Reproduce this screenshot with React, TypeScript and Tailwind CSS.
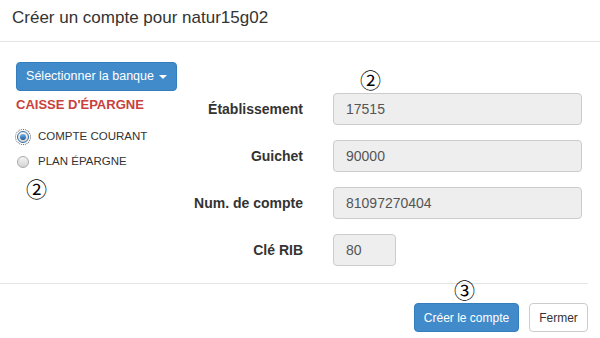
import React from 'react';

const fields = [
  { label: 'Établissement', value: '17515', wide: true },
  { label: 'Guichet', value: '90000', wide: true },
  { label: 'Num. de compte', value: '81097270404', wide: true },
  { label: 'Clé RIB', value: '80', wide: false },
];

function Circled({ n, className }: { n: string; className?: string }) {
  return (
    <span
      className={`text-[21px] leading-none text-black ${className ?? ''}`}
      style={{ fontFamily: '"Noto Sans CJK JP", "DejaVu Sans", sans-serif' }}
    >
      {n}
    </span>
  );
}

function Radio({ checked, label }: { checked?: boolean; label: string }) {
  return (
    <label className="flex h-[13px] items-center gap-[9px] text-[11.5px] text-[#333]">
      <span
        className={`flex h-[12px] w-[12px] items-center justify-center rounded-full border ${
          checked ? 'border-[#2f6aa3] outline-1 outline-dotted outline-[#555] outline-offset-1' : 'border-[#a9a9a9]'
        } bg-gradient-to-b from-[#f4f4f4] to-[#d4d4d4]`}
      >
        {checked && <span className="h-[6px] w-[6px] rounded-full bg-gradient-to-b from-[#6fb3ea] to-[#1a5c9b]" />}
      </span>
      {label}
    </label>
  );
}

export default function App() {
  return (
    <div className="h-[338px] w-[600px] overflow-hidden bg-white" style={{ fontFamily: '"Liberation Sans", Arial, sans-serif' }}>
      {/* Header */}
      <div className="flex h-[42px] items-center border-b border-[#e5e5e5] pl-[12px] pb-[6px]">
        <h1 className="text-[17px] text-[#333]">Créer un compte pour natur15g02</h1>
      </div>

      {/* Body */}
      <div className="flex h-[241px]">
        <div className="flex w-[190px] flex-col pl-[16px] pt-[20px]">
          <button className="flex h-[29px] w-[161px] items-center justify-center gap-[5px] rounded-[4px] border border-[#357ebd] bg-[#428bca] text-[12.5px] text-white">
            Sélectionner la banque
            <span className="mt-[1px] h-0 w-0 border-x-[4px] border-t-[4px] border-x-transparent border-t-white" />
          </button>
          <div className="mt-[4px] text-[13px] font-bold text-[#c9403c]">CAISSE D'ÉPARGNE</div>
          <div className="mt-[16px] flex flex-col gap-[12px] pl-[1px]">
            <Radio checked label="COMPTE COURANT" />
            <Radio label="PLAN ÉPARGNE" />
          </div>
          <div className="mt-[9px] flex h-[22px] items-center pl-[10px]">
            <Circled n="②" />
          </div>
        </div>

        <div className="flex flex-1 flex-col pt-[27px]">
          <div className="flex h-[20px] items-center pl-[170px]">
            <Circled n="②" />
          </div>
          <div className="mt-[4px] flex flex-col gap-[15px]">
            {fields.map(f => (
              <div key={f.label} className="flex items-center">
                <div className="w-[113px] text-right text-[14px] font-bold text-[#333]">{f.label}</div>
                <div
                  className={`ml-[30px] flex h-[32px] items-center rounded-[4px] border border-[#ccc] bg-[#eee] pl-[12px] text-[14px] text-[#555] ${
                    f.wide ? 'w-[249px]' : 'w-[63px]'
                  }`}
                >
                  {f.value}
                </div>
              </div>
            ))}
          </div>
        </div>
      </div>

      {/* Footer */}
      <div className="relative w-[588px] border-t border-[#e5e5e5]">
        <Circled n="③" className="absolute left-[454px] top-[-5px]" />
        <div className="flex justify-end gap-[10px] pt-[19px]">
          <button className="h-[29px] w-[105px] rounded-[4px] border border-[#357ebd] bg-[#428bca] text-[12px] text-white">
            Créer le compte
          </button>
          <button className="h-[29px] w-[59px] rounded-[4px] border border-[#ccc] bg-white text-[12px] text-[#333]">
            Fermer
          </button>
        </div>
      </div>
    </div>
  );
}
